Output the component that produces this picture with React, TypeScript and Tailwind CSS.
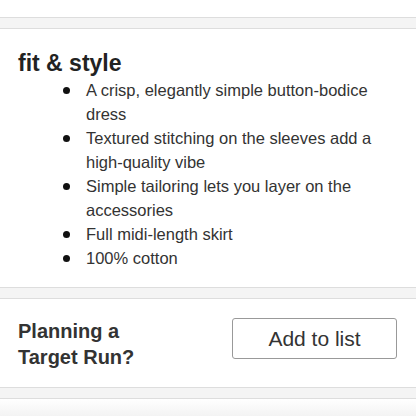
const bullets = [
  'A crisp, elegantly simple button-bodice dress',
  'Textured stitching on the sleeves add a high-quality vibe',
  'Simple tailoring lets you layer on the accessories',
  'Full midi-length skirt',
  '100% cotton',
]

function Gap() {
  return <div className="h-[12px] bg-[#f4f4f4] border-y border-[#dddddd]" />
}

export default function App() {
  return (
    <div className="w-[416px] h-[416px] overflow-hidden bg-white" style={{ fontFamily: '"Liberation Sans", Arial, sans-serif' }}>
      <div className="h-[17px] bg-white" />
      <Gap />
      <div className="bg-white pt-[20px] pb-[17px] pl-[18px] pr-[18px]">
        <h2 className="text-[23px] leading-[28px] font-bold text-[#222]">fit &amp; style</h2>
        <ul className="mt-[1px] text-[16.5px] leading-[24px] text-[#333]">
          {bullets.map(b => (
            <li key={b} className="flex">
              <span className="w-[68px] shrink-0 flex justify-end pr-[16px] pt-[9px]">
                <span className="w-[7px] h-[7px] rounded-full bg-[#111]" />
              </span>
              <span>{b}</span>
            </li>
          ))}
        </ul>
      </div>
      <Gap />
      <div className="bg-white h-[88px] flex items-start justify-between pt-[19px] pl-[18px] pr-[19px]">
        <div className="text-[20px] leading-[26px] font-bold text-[#333]">
          Planning a<br />Target Run?
        </div>
        <button className="w-[165px] h-[41px] border border-[#999] rounded-[3px] bg-white text-[21px] text-[#333] flex items-center justify-center">
          Add to list
        </button>
      </div>
      <Gap />
      <div className="h-[20px] bg-gradient-to-b from-white to-[#f1f1f1]" />
    </div>
  )
}
